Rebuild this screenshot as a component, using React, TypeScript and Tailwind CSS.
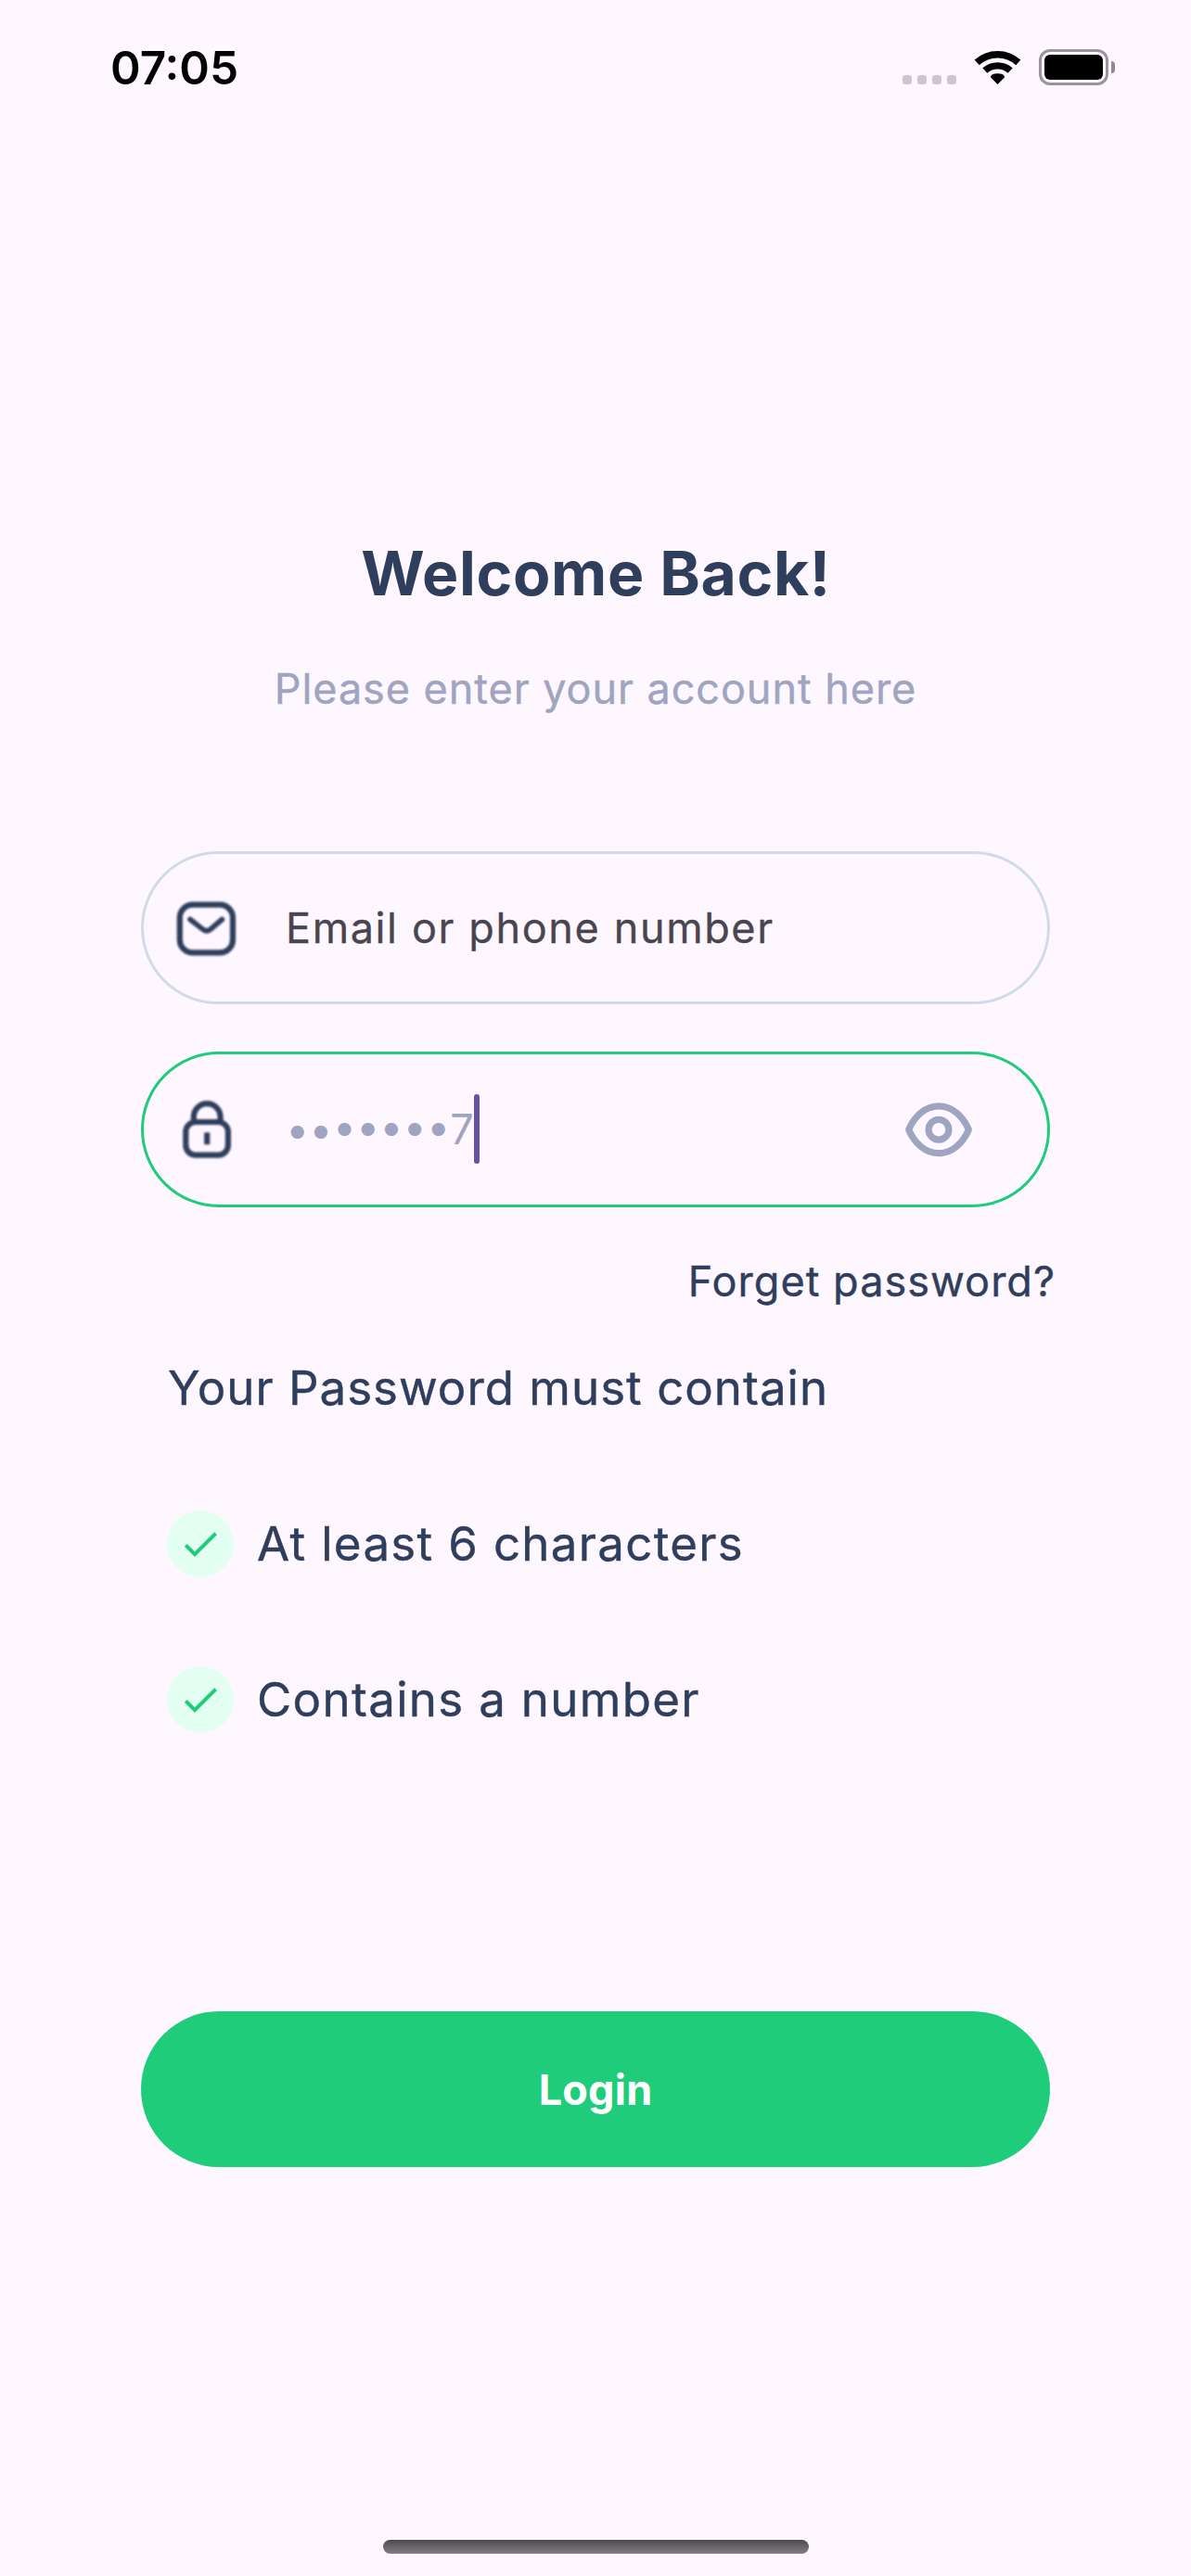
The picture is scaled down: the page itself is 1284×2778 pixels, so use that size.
import type { ReactNode } from "react";

function StatusBar() {
  return (
    <header className="flex h-[146px] items-start justify-between pl-[119px] pr-[82px] pt-[43px] text-black">
      <span className="text-[49.5px] leading-[60px] font-semibold">07:05</span>
      <div className="flex pt-[10px]">
        <div className="mt-[28px] flex gap-[6px]">
          {[0, 1, 2, 3].map((i) => (
            <span key={i} className="size-[10px] rounded-[3px] bg-[#cbc6cd]" />
          ))}
        </div>
        <svg className="ml-[19px] h-[39px] w-[51px]" viewBox="1050 53 51 39">
          <path d="M1053.2 67.4A33 33 0 0 1 1097.8 67.4" fill="none" stroke="#000" strokeWidth="7.6" />
          <path d="M1061.8 76.1A20.5 20.5 0 0 1 1089.2 76.1" fill="none" stroke="#000" strokeWidth="7.4" />
          <path d="M1067.9 83.2Q1068.2 79.4 1075.5 79.2Q1082.8 79.4 1083.1 83.2L1075.5 91Z" />
        </svg>
        <div className="ml-[19px] flex items-center">
          <div className="h-[39px] w-[75px] rounded-[12px] border-[3px] border-[#9a959b] p-[3px]">
            <div className="h-full w-full rounded-[6px] bg-black" />
          </div>
          <div className="ml-[3px] h-[13px] w-[4px] rounded-r-[6px] bg-[#8e898f]" />
        </div>
      </div>
    </header>
  );
}

function MailIcon() {
  return (
    <svg className="h-[72px] w-[72px] blur-[1px]" viewBox="186 964 72 72" fill="none" stroke="#2e3e5c" strokeWidth="6.2" strokeLinecap="round" strokeLinejoin="round">
      <rect x="193.8" y="974.6" width="57.2" height="51.8" rx="14" />
      <path d="M205 990.5L219.2 1001.6Q222.8 1004.2 226.4 1001.6L239.4 990.5" strokeWidth="5.6" />
    </svg>
  );
}

function LockIcon() {
  return (
    <svg className="h-[72px] w-[72px] blur-[1px]" viewBox="187 1182 72 72" fill="none" stroke="#2e3e5c" strokeWidth="6.2">
      <rect x="200.3" y="1210" width="45.6" height="35.6" rx="10.5" />
      <path d="M208.8 1210V1204.5a14.4 14.4 0 0 1 28.8 0V1210" />
      <path d="M223.2 1221.3V1234.2" />
    </svg>
  );
}

function EyeIcon() {
  return (
    <svg className="h-[72px] w-[78px]" viewBox="973.4 1182 78 72" fill="none" stroke="#9fa5c0" strokeWidth="7.2" strokeLinejoin="bevel">
      <path d="M980 1218.2C986.5 1203.5 998 1192.8 1012.4 1192.8S1038.3 1203.5 1044.8 1218.2C1038.3 1233 1026.8 1243.7 1012.4 1243.7S986.5 1233 980 1218.2Z" />
      <circle cx="1012.4" cy="1218.2" r="10.9" />
    </svg>
  );
}

function CheckBadge() {
  return (
    <span className="flex size-[72px] items-center justify-center rounded-full bg-[#e3fff1]">
      <svg className="size-[48px]" viewBox="0 0 24 24" fill="#1fcc79">
        <path d="M9 16.17L4.83 12l-1.42 1.41L9 19 21 7l-1.41-1.41z" />
      </svg>
    </span>
  );
}

function Requirement({ children }: { children: ReactNode }) {
  return (
    <li className="flex h-[72px] items-center">
      <CheckBadge />
      <span className="ml-[25px] text-[51px] leading-[72px] tracking-[1.32px] [-webkit-text-stroke:0.4px_#2e3e5c]">{children}</span>
    </li>
  );
}

export default function App() {
  return (
    <div className="flex h-[2778px] w-[1284px] flex-col overflow-hidden bg-[#fef7ff] font-['Inter',sans-serif] whitespace-nowrap text-[#2e3e5c]">
      <StatusBar />
      <main className="flex flex-col px-[152px]">
        <h1 className="mt-[432px] pl-px text-center text-[66px] leading-[80px] font-bold tracking-[0.63px]">Welcome Back!</h1>
        <p className="mt-[57px] text-center text-[45px] leading-[55px] tracking-[0.94px] text-[#9fa5c0] [-webkit-text-stroke:0.4px_#9fa5c0]">
          Please enter your account here
        </p>
        <div className="mt-[148px] flex h-[165px] items-center rounded-full border-[3px] border-[#d0dbea] pl-[31px]">
          <MailIcon />
          <span className="ml-[50px] text-[45px] leading-[60px] tracking-[1.62px] text-[#49454f] [-webkit-text-stroke:0.3px_#49454f]">
            Email or phone number
          </span>
        </div>
        <div className="mt-[51px] flex h-[168px] items-center rounded-full border-[3px] border-[#1fcc79] pl-[32px] pr-[78px]">
          <LockIcon />
          <span className="ml-[49px] text-[45px] leading-[60px] text-[#9fa5c0]">•••••••7</span>
          <span className="-mt-px h-[75px] w-[6px] rounded-full bg-[#6750a4]" />
          <span className="ml-auto">
            <EyeIcon />
          </span>
        </div>
        <a className="-mr-[6px] mt-[53px] self-end text-[45px] leading-[54px] tracking-[1.04px] [-webkit-text-stroke:0.4px_#2e3e5c]">Forget password?</a>
        <h2 className="ml-[29px] mt-[58px] text-[51px] leading-[60px] font-normal tracking-[1px] [-webkit-text-stroke:0.4px_#2e3e5c]">
          Your Password must contain
        </h2>
        <ul className="ml-[28px] mt-[102px] flex flex-col gap-[96px]">
          <Requirement>At least 6 characters</Requirement>
          <Requirement>Contains a number</Requirement>
        </ul>
        <button className="mt-[300px] h-[168px] rounded-full bg-[#1fcc79] pt-[2px] text-[45px] font-bold tracking-[0.2px] text-white">Login</button>
      </main>
      <div className="mt-[402px] h-[15px] w-[459px] shrink-0 self-center rounded-full bg-linear-to-b from-[#4e4b4f] to-[#827e83]" />
    </div>
  );
}
